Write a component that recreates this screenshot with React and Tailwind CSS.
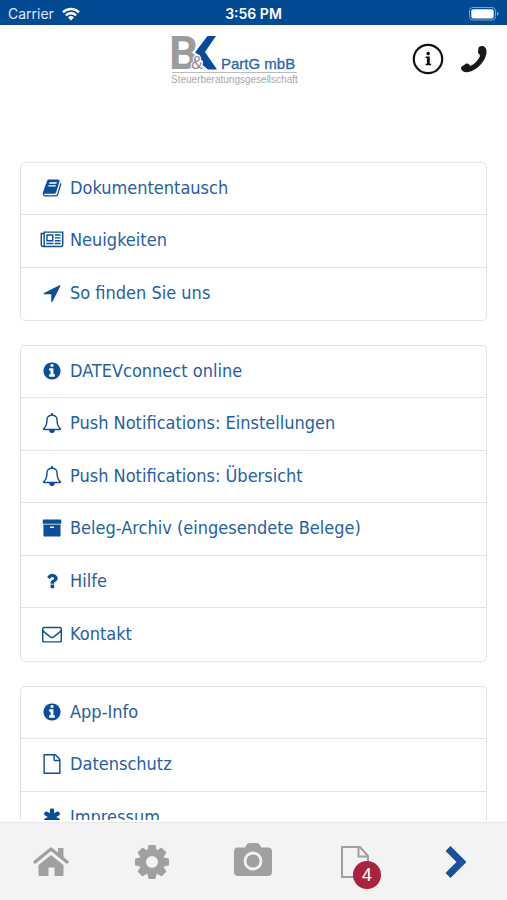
const icons = {
  book: {
    box: '0 0 1792 1792',
    d: 'M1703 478q40 57 18 129l-275 906q-19 64-76.5 107.5t-122.5 43.5h-923q-77 0-148.5-53.5t-99.5-131.5q-24-67-2-127 0-4 3-27t4-37q1-8-3-21.5t-3-19.5q2-11 8-21t16.5-23.5 16.5-23.5q23-38 45-91.5t30-91.5q3-10 .5-30t-.5-28q3-11 17-28t17-23q21-36 42-92t25-90q1-9-2.5-32t.5-28q4-13 22-30.5t22-22.5q19-26 42.5-84.5t27.5-96.5q1-8-3-25.5t-2-26.5q2-8 9-18t18-23 17-21q8-12 16.5-30.5t15-35 16-36 19.5-32 26.5-23.5 36-11.5 47.5 5.5l-1 3q38-9 51-9h761q74 0 114 56t18 130l-274 906q-36 119-71.5 153.5t-128.5 34.5h-869q-27 0-38 15-11 16-1 43 24 70 144 70h923q29 0 56-15.5t35-41.5l300-987q7-22 5-57 38 15 59 43zm-1064 2q-4 13 2 22.5t20 9.5h608q13 0 25.5-9.5t16.5-22.5l21-64q4-13-2-22.5t-20-9.5h-608q-13 0-25.5 9.5t-16.5 22.5zm-83 256q-4 13 2 22.5t20 9.5h608q13 0 25.5-9.5t16.5-22.5l21-64q4-13-2-22.5t-20-9.5h-608q-13 0-25.5 9.5t-16.5 22.5z',
  },
  newspaper: {
    box: '0 0 2048 1792',
    d: 'M1024 512h-384v384h384v-384zm128 640v128h-640v-128h640zm0-768v640h-640v-640h640zm640 768v128h-512v-128h512zm0-256v128h-512v-128h512zm0-256v128h-512v-128h512zm0-256v128h-512v-128h512zm-1536 960v-960h-128v960q0 26 19 45t45 19 45-19 19-45zm1664 0v-1088h-1536v1088q0 33-11 64h1483q26 0 45-19t19-45zm128-1216v1216q0 80-56 136t-136 56h-1664q-80 0-136-56t-56-136v-1088h256v-128h1792z',
  },
  arrow: {
    box: '0 0 1792 1792',
    d: 'M1640 290l-690 1370q-17 35-57 35-5 0-15-2-22-5-35.5-22.5t-13.5-39.5v-616h-616q-22 0-39.500-13.500t-22.500-35.500 4-42 29-30l1380-690q13-7 29-7 27 0 45 19 15 14 18.500 34.500t-16.500 39.500z',
  },
  info: {
    box: '0 0 1792 1792',
    d: 'M1152 1376v-160q0-14-9-23t-23-9h-96v-512q0-14-9-23t-23-9h-320q-14 0-23 9t-9 23v160q0 14 9 23t23 9h96v320h-96q-14 0-23 9t-9 23v160q0 14 9 23t23 9h448q14 0 23-9t9-23zm-128-896v-160q0-14-9-23t-23-9h-192q-14 0-23 9t-9 23v160q0 14 9 23t23 9h192q14 0 23-9t9-23zm640 416q0 209-103 385.5t-279.5 279.5-385.5 103-385.5-103-279.5-279.5-103-385.5 103-385.5 279.5-279.5 385.5-103 385.5 103 279.5 279.5 103 385.5z',
  },
  bell: {
    box: '0 0 1792 1792',
    d: 'M246 1408h1300q-266-300-266-832 0-51-24-105t-69-103-121.500-80.500-169.500-31.500-169.500 31.500-121.500 80.500-69 103-24 105q0 532-266 832zm1482 0q0 52-38 90t-90 38h-448q0 106-75 181t-181 75-181-75-75-181h-448q-52 0-90-38t-38-90q50-42 91-88t85-119.500 74.500-158.500 50-206 19.500-260q0-152 117-282.500t307-158.500q-8-19-8-39 0-40 28-68t68-28 68 28 28 68q0 20-8 39 190 28 307 158.500t117 282.500q0 139 19.500 260t50 206 74.500 158.500 85 119.500 91 88z',
  },
  archive: {
    box: '0 0 1792 1792',
    d: 'M1088 832q0-26-19-45t-45-19h-256q-26 0-45 19t-19 45 19 45 45 19h256q26 0 45-19t19-45zm576-192v960q0 26-19 45t-45 19h-1408q-26 0-45-19t-19-45v-960q0-26 19-45t45-19h1408q26 0 45 19t19 45zm64-448v256q0 26-19 45t-45 19h-1536q-26 0-45-19t-19-45v-256q0-26 19-45t45-19h1536q26 0 45 19t19 45z',
  },
  question: {
    box: '0 0 1792 1792',
    d: 'M1088 1256v240q0 16-12 28t-28 12h-240q-16 0-28-12t-12-28v-240q0-16 12-28t28-12h240q16 0 28 12t12 28zm316-600q0 54-15.5 101t-35 76.5-55 59.500-57.500 43.500-61 35.500q-41 23-68.500 65t-27.500 67q0 17-12 32.500t-28 15.500h-240q-15 0-25.500-18.500t-10.500-37.500v-45q0-83 65-156.500t143-108.500q59-27 84-56t25-76q0-42-46.500-74t-107.500-32q-65 0-108 29-35 25-107 115-13 16-31 16-12 0-25-8l-164-125q-13-10-15.500-25t5.500-28q160-266 464-266 80 0 161 31t146 83 106 127.500 41 158.500z',
  },
  envelope: {
    box: '0 0 1792 1792',
    d: 'M1664 1504v-768q-32 36-69 66-268 206-426 338-51 43-83 67t-86.5 48.5-102.5 24.5h-2q-48 0-102.5-24.5t-86.5-48.5-83-67q-158-132-426-338-37-30-69-66v768q0 13 9.5 22.5t22.5 9.5h1472q13 0 22.5-9.5t9.5-22.5zm0-1051v-24.5l-.5-13-3-12.500-5.500-9-9-7.500-14-2.500h-1472q-13 0-22.500 9.500t-9.500 22.500q0 168 147 284 193 152 401 317 6 5 35 29.500t46 37.500 44.500 31.500 50.500 27.500 43 9h2q20 0 43-9t50.500-27.500 44.500-31.500 46-37.500 35-29.500q208-165 401-317 54-43 100.500-115.500t46.500-131.500zm128-37v1088q0 66-47 113t-113 47h-1472q-66 0-113-47t-47-113v-1088q0-66 47-113t113-47h1472q66 0 113 47t47 113z',
  },
  file: {
    box: '0 0 1792 1792',
    d: 'M1596 380q28 28 48 76t20 88v1152q0 40-28 68t-68 28h-1344q-40 0-68-28t-28-68v-1600q0-40 28-68t68-28h896q40 0 88 20t76 48zm-444-244v376h376q-10-29-22-41l-313-313q-12-12-41-22zm384 1528v-1024h-416q-40 0-68-28t-28-68v-416h-768v1536h1280z',
  },
  asterisk: {
    box: '0 0 1792 1792',
    d: 'M1546 1050q46 26 59.5 77.5t-12.5 97.500l-64 110q-26 46-77.500 59.500t-97.500-12.500l-266-153v307q0 52-38 90t-90 38h-128q-52 0-90-38t-38-90v-307l-266 153q-46 26-97.500 12.500t-77.500-59.500l-64-110q-26-46-12.500-97.500t59.500-77.500l266-154-266-154q-46-26-59.500-77.500t12.500-97.500l64-110q26-46 77.500-59.500t97.500 12.500l266 153v-307q0-52 38-90t90-38h128q52 0 90 38t38 90v307l266-153q46-26 97.500-12.500t77.500 59.500l64 110q26 46 12.500 97.500t-59.500 77.500l-266 154z',
  },
};

const sections = [
  [
    { icon: 'book', label: 'Dokumententausch' },
    { icon: 'newspaper', label: 'Neuigkeiten' },
    { icon: 'arrow', label: 'So finden Sie uns' },
  ],
  [
    { icon: 'info', label: 'DATEVconnect online' },
    { icon: 'bell', label: 'Push Notifications: Einstellungen' },
    { icon: 'bell', label: 'Push Notifications: Übersicht' },
    { icon: 'archive', label: 'Beleg-Archiv (eingesendete Belege)' },
    { icon: 'question', label: 'Hilfe' },
    { icon: 'envelope', label: 'Kontakt' },
  ],
  [
    { icon: 'info', label: 'App-Info' },
    { icon: 'file', label: 'Datenschutz' },
    { icon: 'asterisk', label: 'Impressum' },
  ],
];

function Icon({ name }) {
  return (
    <svg viewBox={icons[name].box} className="h-5 w-6 shrink-0" fill="#0b4f9a" aria-hidden="true">
      <path d={icons[name].d} />
    </svg>
  );
}

function StatusBar() {
  return (
    <div className="grid h-[25px] shrink-0 grid-cols-3 items-center bg-[#034a94] px-2 pt-0.5 font-['Inter',sans-serif] text-sm leading-4 text-white">
      <div className="flex items-center gap-2">
        <span className="text-[#dfe9f4]">Carrier</span>
        <svg viewBox="0 0 18 14" className="h-3.5 w-[18px]" fill="none" stroke="white" strokeWidth="2.4" aria-hidden="true">
          <path d="M1 5.300a11.500 11.500 0 0 1 16 0M3.900 8.300a7.300 7.300 0 0 1 10.200 0" />
          <path d="M9 13.500L6 10.500a4.300 4.300 0 0 1 6 0z" fill="white" stroke="none" />
        </svg>
      </div>
      <span className="text-center font-semibold">3:56 PM</span>
      <svg viewBox="0 0 30 14" className="h-3.5 w-[30px] justify-self-end" aria-hidden="true">
        <rect x="0.500" y="0.500" width="26" height="12.500" rx="3.500" fill="none" stroke="#7ea3ca" />
        <rect x="2.300" y="2.200" width="22.400" height="9.200" rx="2" fill="white" />
        <path d="M28 4.700q1.700 0.700 1.700 2.100T28 8.900z" fill="#7ea3ca" />
      </svg>
    </div>
  );
}

function Logo() {
  return (
    <svg viewBox="0 0 128 52" className="h-[52px] w-32 overflow-visible" fontFamily="'Liberation Sans', sans-serif">
      <text x="-2" y="34" fontSize="46" fontWeight="700" fontFamily="Roboto, sans-serif" fill="#9c9c9c">B</text>
      <path d="M36.500 1H45L34 17l12 17.500H37L31.500 30l.3-4-3.200-2.500.4-3L24 17.500z" fill="#07499a" />
      <text x="20" y="34" fontSize="18" fill="#8f8f8f" stroke="white" strokeWidth="2" paintOrder="stroke">&amp;</text>
      <text x="50" y="34" fontSize="15" fill="#2c64a8" stroke="#2c64a8" strokeWidth="0.300">PartG mbB</text>
      <path d="M1 37.500h125" stroke="#bdbdbd" />
      <text x="0" y="48" fontSize="10" fill="#a9a9a9">Steuerberatungsgesellschaft</text>
    </svg>
  );
}

function Header() {
  return (
    <header className="grid shrink-0 grid-cols-[10fr_auto_11fr] items-start pt-[10px] pr-[19px] pb-[50px]">
      <span />
      <Logo />
      <div className="flex items-center justify-end gap-4 pt-2">
        <button type="button" aria-label="Info">
          <svg viewBox="0 0 32 32" className="block h-8 w-8">
            <circle cx="16" cy="16" r="14.200" fill="none" stroke="#111" strokeWidth="2.200" />
            <path d="M14 13.600h3.800v7.200h1.400v1.400h-5.600v-1.400h1.300V15h-1.300v-1.400z" fill="#111" />
            <circle cx="16.200" cy="10.600" r="1.800" fill="#111" />
          </svg>
        </button>
        <button type="button" aria-label="Telefon">
          <svg viewBox="0 0 28 28" className="block h-7 w-7" fill="#181818">
            <path d="M19.300 1.700c2-1.400 4.700-.9 6 .8 2 2.800 1.600 7.500-1 12-4.200 7.200-10.800 12-17.300 12.700-2.800.3-5-1.200-5.800-3.200-.5-1.200-.1-2.100 1-2.800l3.300-2.200c1.300-.8 2.600-.6 3.600.5l.9 1.200c1.300.2 3.300-1.200 5.700-3.500 2.600-2.500 4.100-4.900 4.400-6.900l-1.100-1.200c-1-1.100-1.200-2.600-.8-4.200.2-1.300.4-2.700 1.100-3.200z" />
          </svg>
        </button>
      </div>
    </header>
  );
}

function MenuSection({ items }) {
  return (
    <ul className="divide-y divide-[#e4e4e4] rounded-[5px] border border-[#e2e2e2]">
      {items.map((item) => (
        <li key={item.label} className="h-[52px] even:h-[53px]">
          <a href="#" className="flex h-full items-center gap-1.5 px-[19px] pb-0.5 text-[#2560a4]">
            <Icon name={item.icon} />
            <span className="font-['DejaVu_Sans_Condensed','Noto_Sans',sans-serif] text-lg leading-6">{item.label}</span>
          </a>
        </li>
      ))}
    </ul>
  );
}

function TabBar() {
  return (
    <nav className="grid h-[78px] shrink-0 grid-cols-5 items-center border-t border-[#e8e8e8] bg-[#f3f3f3] text-[#a0a0a0]">
      <button type="button" aria-label="Start" className="flex justify-center">
        <svg viewBox="0 0 36 32" className="h-8 w-9" fill="currentColor">
          <path d="M18 9L30.500 19V29q0 1-1 1h-8v-8.500h-6V30H6.500q-1 0-1-1V19z" />
          <path d="M25 2h5.500v13L25 10z" />
          <path d="M2 18.500L18 5.500L34 18.500" fill="none" stroke="#f3f3f3" strokeWidth="3" />
          <path d="M2 16L18 3L34 16" fill="none" stroke="currentColor" strokeWidth="3.400" strokeLinecap="round" strokeLinejoin="round" />
        </svg>
      </button>
      <button type="button" aria-label="Einstellungen" className="flex justify-center">
        <svg viewBox="-18 -18 36 36" className="h-9 w-9" fill="currentColor">
          <path fillRule="evenodd" d="M-12.500 0a12.500 12.500 0 1 0 25 0a12.500 12.500 0 1 0-25 0zM-6 0a6 6 0 1 1 12 0a6 6 0 1 1-12 0z" />
          {[0, 45, 90, 135, 180, 225, 270, 315].map((angle) => (
            <path key={angle} d="M-4.800-11L-3.600-16.500q.2-.5.700-.5h5.800q.5 0 .7.500L4.800-11z" transform={`rotate(${angle})`} />
          ))}
        </svg>
      </button>
      <button type="button" aria-label="Kamera" className="flex justify-center pb-1">
        <svg viewBox="0 0 40 40" className="h-10 w-10">
          <path d="M12 7.500l1.500-2.500q1-2 3.200-2h7q2.200 0 3.200 2l1.300 2.500H35q4 0 4 4V32q0 4-4 4H5q-4 0-4-4V11.500q0-4 4-4z" fill="currentColor" />
          <circle cx="20" cy="21" r="8" fill="none" stroke="#f3f3f3" strokeWidth="2.800" />
        </svg>
      </button>
      <button type="button" aria-label="Dokumente" className="flex justify-center">
        <span className="relative">
          <svg viewBox="0 0 28 34" className="block h-[34px] w-7" fill="none" stroke="currentColor" strokeWidth="2">
            <path d="M1 2h18l8 9v21H1zM17.500 2v9.500H27" />
          </svg>
          <span className="absolute top-4 left-3 flex size-7 items-center justify-center rounded-full bg-[#a9233c] font-['Roboto',sans-serif] text-lg leading-6 text-white">
            4
          </span>
        </span>
      </button>
      <button type="button" aria-label="Weiter" className="flex justify-center">
        <svg viewBox="0 0 22 34" className="h-[34px] w-[22px]" fill="none" stroke="#15529b" strokeWidth="7">
          <path d="M3 3.500L16.500 17L3 30.500" />
        </svg>
      </button>
    </nav>
  );
}

export default function App() {
  return (
    <div className="flex h-screen flex-col bg-white">
      <StatusBar />
      <Header />
      <main className="mx-5 mb-[2px] min-h-0 flex-1 space-y-6 overflow-hidden pt-[25px]">
        {sections.map((items, index) => (
          <MenuSection key={index} items={items} />
        ))}
      </main>
      <TabBar />
    </div>
  );
}
